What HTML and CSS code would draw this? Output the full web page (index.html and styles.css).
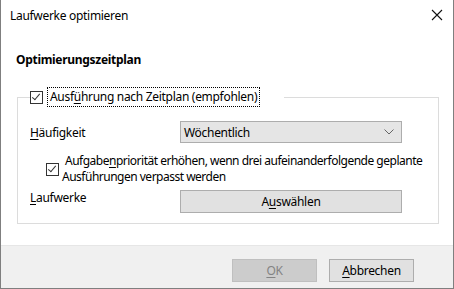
FILE: index.html
```html
<!DOCTYPE html>
<html>
<head>
    <title>Laufwerke optimieren</title>
    <link rel="stylesheet" href="styles.css">
</head>
<body>
    <div class="window">
        <div class="titlebar">
            <span class="title">Laufwerke optimieren</span>
            <svg class="close" width="12" height="12" viewBox="0 0 12 12">
                <path d="M1 1 L11 11 M11 1 L1 11" stroke="#111" stroke-width="1.1" fill="none"/>
            </svg>
        </div>

        <div class="content">
            <div class="section-title">Optimierungszeitplan</div>

            <fieldset class="group">
                <legend>
                    <span class="checkbox checked"></span>
                    <span class="focus-label">Ausf<u>ü</u>hrung nach Zeitplan (empfohlen)</span>
                </legend>

                <div class="form-row">
                    <label class="row-label"><u>H</u>äufigkeit</label>
                    <div class="select">
                        <span>Wöchentlich</span>
                        <svg width="10" height="6" viewBox="0 0 10 6">
                            <path d="M0.5 0.5 L5 5 L9.5 0.5" stroke="#666" stroke-width="1" fill="none"/>
                        </svg>
                    </div>
                </div>

                <div class="check-row">
                    <span class="checkbox checked"></span>
                    <span class="check-text"><span class="indent">Aufgabe<u>n</u>priorität erhöhen, wenn drei aufeinanderfolgende geplante</span><br>Ausführungen verpasst werden</span>
                </div>

                <div class="form-row drives-row">
                    <label class="row-label"><u>L</u>aufwerke</label>
                    <button class="btn wide">A<u>u</u>swählen</button>
                </div>
            </fieldset>
        </div>

        <div class="footer">
            <button class="btn disabled"><u>O</u>K</button>
            <button class="btn"><u>A</u>bbrechen</button>
        </div>
    </div>
</body>
</html>
```

FILE: styles.css
```css
/* Dialog frame */
body {
    margin: 0;
    padding: 0;
    font-family: 'Noto Sans', 'Open Sans', sans-serif;
    font-size: 12px;
    letter-spacing: -0.3px;
    color: #000000;
    background-color: #ffffff;
}

.window {
    width: 454px;
    height: 289px;
    box-sizing: border-box;
    border-left: 1px solid #7f7f7f;
    border-right: 1px solid #7f7f7f;
    border-bottom: 1px solid #7f7f7f;
    display: flex;
    flex-direction: column;
    overflow: hidden;
}

.titlebar {
    height: 31px;
    display: flex;
    align-items: center;
    justify-content: space-between;
    padding: 0 10px 0 9px;
    flex-shrink: 0;
}

.title {
    margin-top: -1px;
}

.close {
    margin-top: -2px;
}

/* Main area */
.content {
    background-color: #ffffff;
    height: 214px;
    padding: 0 15px;
    flex-shrink: 0;
}

.section-title {
    font-weight: bold;
    margin-top: 21px;
    line-height: 16px;
}

.group {
    border: 1px solid #dcdcdc;
    margin: 19px 0 0 1px;
    padding: 0 12px;
    height: 137px;
    box-sizing: border-box;
    width: 422px;
}

.group legend {
    padding: 0 24px 0 0;
    display: flex;
    align-items: center;
    line-height: 16px;
}

.checkbox {
    display: inline-block;
    width: 11px;
    height: 11px;
    border: 1px solid #333333;
    background-color: #ffffff;
    position: relative;
    flex-shrink: 0;
}

.checkbox.checked::after {
    content: '';
    position: absolute;
    left: 3px;
    top: 0;
    width: 3px;
    height: 7px;
    border-right: 1px solid #333333;
    border-bottom: 1px solid #333333;
    transform: rotate(40deg);
}

.focus-label {
    border: 1px dotted #000000;
    padding: 1px 2px;
    margin-left: 4px;
}

u {
    text-decoration: underline;
    text-underline-offset: 2px;
}

.form-row {
    display: flex;
    align-items: center;
    margin-top: 14px;
}

.row-label {
    width: 150px;
    flex-shrink: 0;
}

.select {
    width: 222px;
    height: 22px;
    box-sizing: border-box;
    border: 1px solid #adadad;
    background-color: #e5e5e5;
    display: flex;
    align-items: center;
    justify-content: space-between;
    padding: 0 7px 0 3px;
}

.check-row {
    display: flex;
    align-items: center;
    margin: 10px 0 0 16px;
}

.check-text {
    margin-left: 3px;
    line-height: 16px;
    letter-spacing: -0.5px;
    white-space: nowrap;
}

.indent {
    padding-left: 3px;
}

.drives-row {
    margin-top: 5px;
    align-items: flex-start;
}

.drives-row .row-label {
    margin-top: -1px;
}

/* Buttons */
.btn {
    font-family: inherit;
    font-size: 12px;
    letter-spacing: -0.3px;
    width: 85px;
    height: 23px;
    box-sizing: border-box;
    border: 1px solid #adadad;
    background-color: #e1e1e1;
    color: #000000;
    padding: 0;
    margin: 0;
}

.btn.wide {
    width: 222px;
}

.btn.disabled {
    background-color: #cccccc;
    border-color: #bfbfbf;
    color: #838383;
}

.footer {
    flex: 1;
    background-color: #f0f0f0;
    border-top: 1px solid #e6e6e6;
    display: flex;
    justify-content: flex-end;
    align-items: flex-start;
    gap: 12px;
    padding: 13px 39px 0 0;
}
```
